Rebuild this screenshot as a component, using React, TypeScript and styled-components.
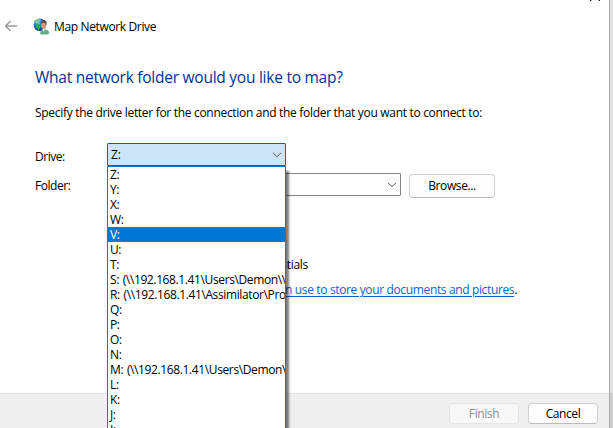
import React from "react";
import styled, { createGlobalStyle } from "styled-components";

const GlobalStyle = createGlobalStyle`
  * { box-sizing: border-box; }
  body {
    margin: 0;
    background: #fff;
    color: #000;
    font: 12px/15px "Open Sans", "Noto Sans", sans-serif;
    overflow: hidden;
  }
`;

const Screen = styled.div`
  display: flex;
  width: 613px;
  height: 428px;
  overflow: hidden;
`;

const Dialog = styled.main`
  display: flex;
  flex-direction: column;
  width: 609px;
  background: #fff;
  white-space: nowrap;
`;

const Backdrop = styled.div<{ $height: number; $dark?: boolean }>`
  height: ${(p) => p.$height}px;
  background: ${(p) => (p.$dark ? "#cdcdcd" : "#e2e2e2")};
`;

const Edge = styled.div`
  width: 4px;
  border-left: 1px solid #a9a9a9;
`;

const CaptionBar = styled.div`
  display: flex;
  justify-content: flex-end;
  height: 16px;
  padding-right: 9px;
`;

const Header = styled.header`
  display: flex;
  align-items: center;
  height: 20px;
  padding-left: 4px;
`;

const HeaderIcon = styled.span<{ $gap: number }>`
  display: flex;
  margin-right: ${(p) => p.$gap}px;
`;

const Caption = styled.span<{ $spacing: number }>`
  padding-top: 1px;
  letter-spacing: ${(p) => p.$spacing}px;
`;

const Content = styled.section`
  height: 357px;
  padding: 30px 0 0 35px;
`;

const Title = styled.h1`
  margin: 0;
  height: 22px;
  font-size: 15.5px;
  font-weight: 400;
  line-height: 22px;
  letter-spacing: -0.25px;
  color: #003399;
`;

const Intro = styled.p`
  margin: 17px 0 23px;
  letter-spacing: -0.305px;
`;

const Row = styled.div<{ $height: number }>`
  display: flex;
  align-items: center;
  height: ${(p) => p.$height}px;
`;

const Label = styled.label<{ $drop: number }>`
  width: 72px;
  padding-top: ${(p) => p.$drop}px;
  letter-spacing: -0.45px;
`;

const ComboWrap = styled.div`
  position: relative;
`;

const Combo = styled.div<{ $width: number; $open?: boolean }>`
  display: flex;
  align-items: center;
  justify-content: space-between;
  width: ${(p) => p.$width}px;
  height: 23px;
  padding: 0 3px;
  border: 1px solid ${(p) => (p.$open ? "#005fb8" : "#858585")};
  border-radius: 1px;
  background: ${(p) => (p.$open ? "#cce4f7" : "#fff")};
`;

const List = styled.ul`
  position: absolute;
  z-index: 2;
  top: 23px;
  left: 0;
  width: 179px;
  height: 280px;
  margin: 0;
  padding: 0;
  overflow: hidden;
  list-style: none;
  border: 1px solid #0078d7;
  background: #fff;
  box-shadow: 3px 5px 2px rgba(0, 0, 0, 0.5);
`;

const Option = styled.li<{ $selected?: boolean }>`
  height: 15px;
  padding-left: 2px;
  overflow: hidden;
  letter-spacing: -0.38px;
  word-spacing: 1px;
  color: ${(p) => (p.$selected ? "#fff" : "#000")};
  background: ${(p) => (p.$selected ? "#0078d7" : "transparent")};
`;

const Button = styled.button<{ $width: number; $height: number; $left: number; $top?: number }>`
  width: ${(p) => p.$width}px;
  height: ${(p) => p.$height}px;
  margin: ${(p) => p.$top ?? 0}px 0 0 ${(p) => p.$left}px;
  padding: 0 0 ${(p) => (p.$top ? 2 : 0)}px;
  border: 1px solid #d0d0d0;
  border-bottom-color: #bcbcbc;
  border-radius: 4px;
  background: #fdfdfd;
  color: #000;
  font: inherit;
  letter-spacing: -0.4px;
  &:disabled {
    color: #8f8f8f;
    border-color: #e4e4e4;
    background: #f8f8f8;
  }
`;

const Extra = styled.div<{ $right: number; $top: number; $spacing: number }>`
  display: flex;
  justify-content: flex-end;
  width: ${(p) => p.$right - 35}px;
  margin-top: ${(p) => p.$top}px;
  letter-spacing: ${(p) => p.$spacing}px;
`;

const Link = styled.a`
  color: #0f62c8;
  text-decoration: underline;
  text-underline-offset: 2px;
`;

const Footer = styled.footer`
  display: flex;
  height: 35px;
  padding: 9px 0 0 449px;
  border-top: 1px solid #dfdfdf;
  background: #f0f0f0;
`;

const Chevron = () => (
  <svg width="10" height="6" viewBox="0 0 10 6" fill="none" stroke="#555">
    <path d="M1 .8 5 4.8 9 .8" />
  </svg>
);

const BackArrow = () => (
  <svg width="14" height="12" viewBox="0 0 14 12" fill="none" stroke="#999" strokeWidth="1.4">
    <path d="M13 6H1.5M6.5 1 1.5 6l5 5" />
  </svg>
);

const NetworkIcon = () => (
  <svg width="17" height="17" viewBox="0 0 17 17">
    <defs>
      <radialGradient id="globe" cx=".35" cy=".3" r=".75">
        <stop offset="0" stopColor="#8fd5ff" />
        <stop offset=".45" stopColor="#1d78dc" />
        <stop offset="1" stopColor="#082a86" />
      </radialGradient>
    </defs>
    <circle cx="6.8" cy="6.8" r="6.3" fill="url(#globe)" />
    <path d="M2 3.2C4 .9 6 .6 7.5 1L6.5 3 4.8 4.5 3.2 4.2 1.2 5.5Z" fill="#7dc985" />
    <path d="M4.7 5.6 7.6 7 7 10.2 5.6 12.8 3.8 9.8 2.6 7Z" fill="#28ae42" />
    <path d="M7.2 15.8c-.2-3.1 1.1-4.6 3.4-4.9 3.1.1 5.6 2 5.7 4.3l-2.2 1.3H8Z" fill="#66ac87" />
    <path d="m9.4 10.8 1.3 3.1 1.5-2.9Z" fill="#eef4ee" />
    <ellipse cx="10.6" cy="7.3" rx="2.5" ry="3.8" fill="#d69b76" />
    <path d="M7.8 6.8C7.2 3.5 9 1.8 11 2.2c2.5.1 3.3 2.5 2.1 5.8L12.3 5 9 4.8Z" fill="#604938" />
  </svg>
);

const CloseTip = () => (
  <svg width="10" height="1" viewBox="0 0 10 1">
    <path d="M0 0h1v1H0zM9 0h1v1H9z" fill="#222" />
    <path d="M1 0h1v1H1zM8 0h1v1H8z" fill="#aaa" />
  </svg>
);

const drives = [
  "Z:", "Y:", "X:", "W:", "V:", "U:", "T:",
  "S: (\\\\192.168.1.41\\Users\\Demon\\Videos)",
  "R: (\\\\192.168.1.41\\Assimilator\\Projects)",
  "Q:", "P:", "O:", "N:",
  "M: (\\\\192.168.1.41\\Users\\Demon\\Music)",
  "L:", "K:", "J:", "I:",
];

export default function App() {
  return (
    <Screen>
      <GlobalStyle />
      <Dialog>
        <CaptionBar><CloseTip /></CaptionBar>
        <Header>
          <HeaderIcon $gap={15}><BackArrow /></HeaderIcon>
          <HeaderIcon $gap={4}><NetworkIcon /></HeaderIcon>
          <Caption $spacing={-0.36}>Map Network Drive</Caption>
        </Header>
        <Content>
          <Title>What network folder would you like to map?</Title>
          <Intro>Specify the drive letter for the connection and the folder that you want to connect to:</Intro>
          <Row $height={23}>
            <Label $drop={3}>Drive:</Label>
            <ComboWrap>
              <Combo $width={179} $open>Z:<Chevron /></Combo>
              <List>
                {drives.map((d) => (
                  <Option key={d} $selected={d === "V:"}>{d}</Option>
                ))}
              </List>
            </ComboWrap>
          </Row>
          <Row $height={37}>
            <Label $drop={2}>Folder:</Label>
            <Combo $width={294}><span /><Chevron /></Combo>
            <Button $width={86} $height={24} $left={8} $top={3}>Browse...</Button>
          </Row>
          <Extra $right={308} $top={54} $spacing={-0.3}>Connect using different credentials</Extra>
          <Extra $right={517} $top={10} $spacing={-0.36}>
            <Link>Connect to a Web site that you can use to store your documents and pictures</Link>.
          </Extra>
        </Content>
        <Footer>
          <Button $width={70} $height={21} $left={0} disabled>Finish</Button>
          <Button $width={70} $height={21} $left={9}>Cancel</Button>
        </Footer>
      </Dialog>
      <Edge>
        <Backdrop $height={393} />
        <Backdrop $height={35} $dark />
      </Edge>
    </Screen>
  );
}
